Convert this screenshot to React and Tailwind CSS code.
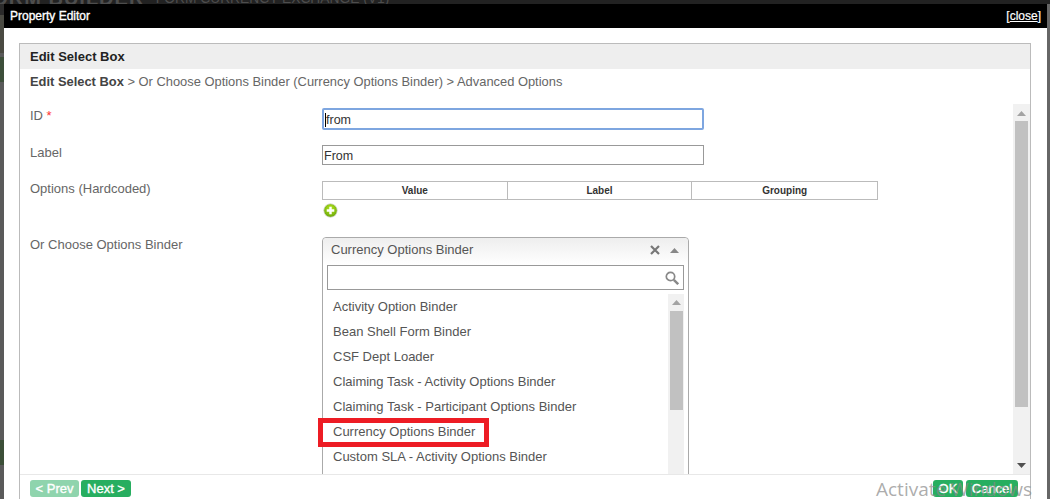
const font = "font-['Liberation_Sans',Arial,sans-serif]";

function Up({ className, color = "#a3a3a3" }) {
  return (
    <svg className={className} width="9" height="5" viewBox="0 0 9 5">
      <path d="M4.5 0L9 5H0z" fill={color} />
    </svg>
  );
}

function Plus() {
  return (
    <svg width="15" height="15" viewBox="0 0 16 16" className="block ml-[1px]">
      <defs>
        <radialGradient id="g" cx="50%" cy="35%" r="65%">
          <stop offset="0%" stopColor="#b5e61d" />
          <stop offset="100%" stopColor="#6aa80a" />
        </radialGradient>
      </defs>
      <circle cx="8" cy="8" r="7.2" fill="url(#g)" stroke="#d5d5d5" strokeWidth="0.8" />
      <path d="M8 4v8M4 8h8" stroke="#fff" strokeWidth="2.6" />
    </svg>
  );
}

function Row({ label, star, children, className }) {
  return (
    <div className={`flex ${className}`}>
      <div className="w-[292px] shrink-0 text-[13px] text-[#666] leading-[16px]">
        {label}
        {star && <span className="text-[#f33]"> *</span>}
      </div>
      {children}
    </div>
  );
}

const options = [
  "Activity Option Binder",
  "Bean Shell Form Binder",
  "CSF Dept Loader",
  "Claiming Task - Activity Options Binder",
  "Claiming Task - Participant Options Binder",
  "Currency Options Binder",
  "Custom SLA - Activity Options Binder",
];

const btn =
  "h-[17px] rounded-[3px] text-white text-[13px] [-webkit-text-stroke:0.35px_white] flex items-center justify-center";

export default function App() {
  return (
    <div className={`${font} relative w-[1050px] h-[499px] overflow-hidden bg-[#222] flex flex-col`}>
      <div className="h-[4px] shrink-0 flex items-end overflow-hidden text-[#4d4d4d] whitespace-nowrap">
        <span className="text-[20px] font-bold leading-none tracking-[1px] -ml-[21px] -mb-[4px]">FORM BUILDER</span>
        <span className="text-[13.8px] leading-none ml-[3px] -mb-[2px]">- FORM CURRENCY EXCHANGE (V1)</span>
      </div>

      <div className="flex-1 flex min-h-0">
        <div className="w-[4px] shrink-0 flex flex-col bg-[#5a5a5a]">
          <div className="h-[11px] bg-[#2b2b2b]" />
          <div className="h-[38px] bg-[#4a4a42]" />
          <div className="h-[4px]" />
          <div className="h-[25px] bg-[#3d4f3a]" />
          <div className="h-[358px]" />
          <div className="h-[25px] bg-[#3c4f38]" />
        </div>

        <div className="flex-1 min-w-0 flex flex-col bg-white">
          <div className="h-[24px] shrink-0 bg-black text-white flex items-center justify-between pl-[6px] pr-[6px] text-[12px]">
            <span className="[-webkit-text-stroke:0.35px_white]">Property Editor</span>
            <span className="[-webkit-text-stroke:0.2px_white]">
              [<span className="underline">close</span>]
            </span>
          </div>

          <div className="flex-1 min-h-0 pt-[15px] pl-[15px] pr-[16px]">
            <div className="h-full border-x border-t border-[#bbb] flex flex-col">
              <div className="h-[25px] shrink-0 bg-[#eee] flex items-center pl-[10px] pt-[1px] text-[13px] font-bold text-[#222]">
                Edit Select Box
              </div>
              <div className="h-[35px] shrink-0 pl-[10px] pt-[5px] text-[12.9px] text-[#666] leading-[16px]">
                <span className="font-bold text-[#444]">Edit Select Box</span> &gt; Or Choose Options Binder (Currency Options Binder) &gt; Advanced Options
              </div>

              <div className="h-[370px] shrink-0 flex overflow-hidden">
                <div className="flex-1 min-w-0 pl-[10px]">
                  <Row label="ID" star className="pt-[4px]">
                    <div className="w-[382px] h-[22px] border-2 border-[#7ea6e0] rounded-[2px] pl-[1px] pt-[1px] text-[12.5px] text-[#333] flex items-center">
                      <span className="border-l border-black leading-[14px]">from</span>
                    </div>
                  </Row>
                  <Row label="Label" className="pt-[15px]">
                    <div className="w-[382px] h-[20px] border border-[#999] pl-[1px] pt-[2px] text-[12.5px] text-[#333] flex items-center">
                      From
                    </div>
                  </Row>
                  <Row label="Options (Hardcoded)" className="pt-[16px]">
                    <div>
                      <div className="w-[556px] h-[19px] border border-[#bbb] grid grid-cols-3 text-[10px] font-bold text-[#333]">
                        <div className="flex items-center justify-center border-r border-[#bbb]">Value</div>
                        <div className="flex items-center justify-center border-r border-[#bbb]">Label</div>
                        <div className="flex items-center justify-center">Grouping</div>
                      </div>
                      <div className="pt-[3px]">
                        <Plus />
                      </div>
                    </div>
                  </Row>
                  <Row label="Or Choose Options Binder" className="pt-[19px]">
                    <div className="w-[367px] h-[300px] border border-[#aaa] rounded-t-[4px] flex flex-col">
                      <div className="h-[27px] shrink-0 rounded-t-[4px] bg-gradient-to-b from-[#eee] to-white flex items-center pl-[8px] pr-[9px] pb-[3px] text-[13px] text-[#555]">
                        <span className="flex-1">Currency Options Binder</span>
                        <svg width="10" height="10" viewBox="0 0 10 10" className="mr-[10px]">
                          <path d="M1 1l8 8M9 1l-8 8" stroke="#777" strokeWidth="2.2" />
                        </svg>
                        <Up color="#888" />
                      </div>
                      <div className="mx-[4px] h-[25px] shrink-0 border border-[#999] flex items-center justify-end pr-[4px]">
                        <svg width="14" height="14" viewBox="0 0 14 14">
                          <circle cx="5.5" cy="5.5" r="4.2" fill="none" stroke="#888" strokeWidth="1.7" />
                          <path d="M8.8 8.8l4.4 4.4" stroke="#888" strokeWidth="2.4" />
                        </svg>
                      </div>
                      <div className="flex-1 min-h-0 flex pl-[4px] pr-[4px] pt-[4px]">
                        <div className="flex-1 min-w-0 pl-[6px] text-[13px] text-[#555]">
                          {options.map((o) => (
                            <div key={o} className="h-[25px] flex items-center">{o}</div>
                          ))}
                        </div>
                        <div className="w-[16px] shrink-0 bg-[#f1f1f1] flex flex-col items-center pt-[6px]">
                          <Up />
                          <div className="mt-[6px] w-[13px] h-[99px] bg-[#c1c1c1]" />
                        </div>
                      </div>
                    </div>
                  </Row>
                </div>
                <div className="w-[17px] shrink-0 bg-[#f1f1f1] flex flex-col items-center pt-[7px]">
                  <Up />
                  <div className="mt-[5px] w-[13px] h-[286px] bg-[#c1c1c1]" />
                  <div className="flex-1" />
                  <Up color="#505050" className="mb-[6px] rotate-180" />
                </div>
              </div>

              <div className="flex-1 min-h-0 border-t border-[#e8e8e8] flex items-start justify-between pl-[10px] pr-[12px] pt-[5px]">
                <div className="flex gap-[2px]">
                  <div className={`${btn} w-[49px] bg-[#8fd4ad]`}>&lt; Prev</div>
                  <div className={`${btn} w-[50px] bg-[#27ae60]`}>Next &gt;</div>
                </div>
                <div className="flex gap-[3px]">
                  <div className={`${btn} w-[30px] bg-[#27ae60]`}>OK</div>
                  <div className={`${btn} w-[52px] bg-[#27ae60]`}>Cancel</div>
                </div>
              </div>
            </div>
          </div>
        </div>

        <div className="w-[3px] shrink-0 bg-[#666]" />
      </div>

      <div className="absolute left-[318px] top-[418px] w-[171px] h-[29px] border-[5px] border-[#ed1c24]" />
      <div className="absolute left-[876px] top-[477px] text-[19px] leading-[24px] text-[#888]/70 font-['Open_Sans',sans-serif] whitespace-nowrap">
        Activate Windows
      </div>
    </div>
  );
}
